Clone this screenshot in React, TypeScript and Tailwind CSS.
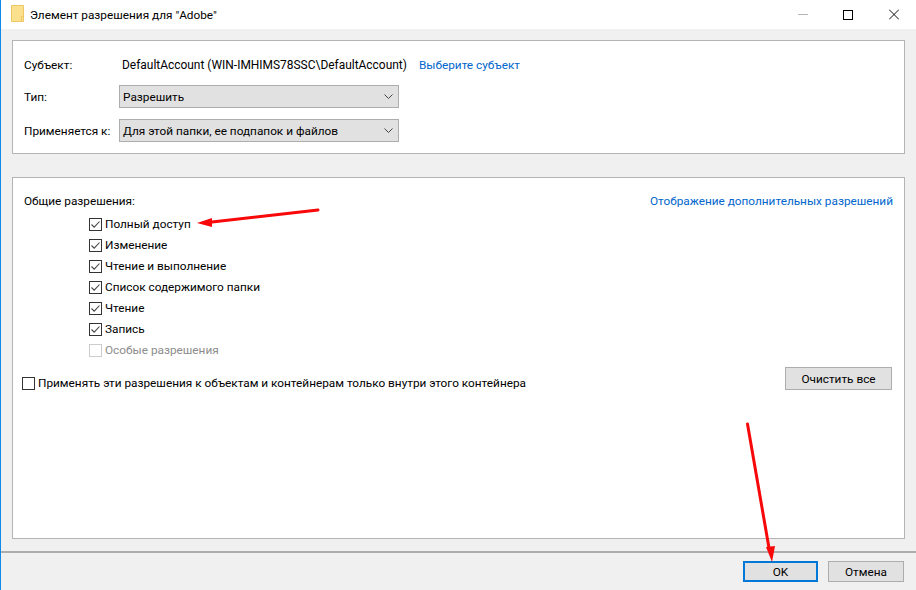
const font = { fontFamily: 'Roboto, "Noto Sans", sans-serif' };

const permissions = [
  'Полный доступ',
  'Изменение',
  'Чтение и выполнение',
  'Список содержимого папки',
  'Чтение',
  'Запись',
];

const Check = ({ checked = true, disabled = false }: { checked?: boolean; disabled?: boolean }) => (
  <span
    className={`flex h-[13px] w-[13px] shrink-0 items-center justify-center border bg-white ${
      disabled ? 'border-[#cccccc]' : 'border-[#333333]'
    }`}
  >
    {checked && (
      <svg width="11" height="11" viewBox="0 0 11 11" fill="none">
        <path d="M1.5 5.5 L4.2 8.2 L9.5 2.5" stroke="#444444" strokeWidth="1.1" />
      </svg>
    )}
  </span>
);

const Select = ({ value }: { value: string }) => (
  <div className="flex h-[23px] w-[280px] items-center justify-between border border-[#adadad] bg-[#e1e1e1] pl-[3px] pr-[5px]">
    <span>{value}</span>
    <svg width="9" height="6" viewBox="0 0 9 6" fill="none">
      <path d="M0.5 0.5 L4.5 4.5 L8.5 0.5" stroke="#444444" strokeWidth="1" />
    </svg>
  </div>
);

const Button = ({ label, className }: { label: string; className: string }) => (
  <div className={`flex items-center justify-center bg-[#e1e1e1] ${className}`}>{label}</div>
);

const App = () => (
  <div
    className="relative flex h-[590px] w-[916px] flex-col overflow-hidden border-l border-[#0f8ae6] bg-[#f0f0f0] text-[11.8px] leading-[16px] text-black"
    style={font}
  >
    <div className="flex h-[29px] shrink-0 items-center bg-white">
      <svg className="ml-[10px] -mt-[3px]" width="14" height="17" viewBox="0 0 14 17">
        <path d="M0.5 0.5 H12.5 V16.5 H0.5 Z" fill="#fbe08d" stroke="#eec864" />
        <path d="M10.5 16 V11.5 H13" fill="none" stroke="#eec864" />
      </svg>
      <span className="ml-[5px]">Элемент разрешения для "Adobe"</span>
      <div className="ml-auto flex items-center gap-[35px] pr-[17px]">
        <span className="h-px w-[10px] bg-[#b5b5b5]" />
        <span className="h-[10px] w-[10px] border border-black" />
        <svg className="ml-px" width="10" height="11" viewBox="0 0 10 11" fill="none">
          <path d="M0 0.5 L10 10.5 M10 0.5 L0 10.5" stroke="#111111" strokeWidth="1" />
        </svg>
      </div>
    </div>

    <div className="flex min-h-0 flex-1 flex-col px-[11px] pt-[11px]">
      <section className="flex h-[114px] w-[893px] shrink-0 flex-col border border-[#b4b4b4] bg-white pl-[11px] pt-[15px]">
        <div className="flex h-[18px] items-center">
          <span className="w-[98px]">Субъект:</span>
          <span className="text-[11.95px]">DefaultAccount (WIN-IMHIMS78SSC\DefaultAccount)</span>
          <span className="ml-[12px] text-[#0066cc]">Выберите субъект</span>
        </div>
        <div className="mt-[11px] flex items-center">
          <span className="w-[95px]">Тип:</span>
          <Select value="Разрешить" />
        </div>
        <div className="mt-[11px] flex items-center">
          <span className="w-[95px]">Применяется к:</span>
          <Select value="Для этой папки, ее подпапок и файлов" />
        </div>
      </section>

      <section className="mt-[23px] flex h-[362px] w-[893px] shrink-0 flex-col border border-[#b4b4b4] bg-white pt-[15px]">
        <div className="flex h-[16px] items-center justify-between pl-[11px] pr-[11px]">
          <span>Общие разрешения:</span>
          <span className="text-[#0066cc]">Отображение дополнительных разрешений</span>
        </div>
        <div className="mt-[7px] flex flex-col gap-[5px] pl-[76px]">
          {permissions.map((item) => (
            <label key={item} className="flex h-[16px] items-center gap-[3px]">
              <Check />
              <span>{item}</span>
            </label>
          ))}
          <label className="flex h-[16px] items-center gap-[3px] text-[#8c8c8c]">
            <Check checked={false} disabled />
            <span>Особые разрешения</span>
          </label>
        </div>
        <div className="mt-[9px] flex items-start justify-between pl-[9px] pr-[12px]">
          <label className="mt-[8px] flex h-[16px] items-center gap-[3px]">
            <Check checked={false} />
            <span>Применять эти разрешения к объектам и контейнерам только внутри этого контейнера</span>
          </label>
          <Button label="Очистить все" className="h-[23px] w-[107px] border border-[#adadad]" />
        </div>
      </section>
    </div>

    <div className="flex h-[39px] shrink-0 items-start justify-end gap-[10px] border-t-2 border-[#adadad] pr-[12px] pt-[8px]">
      <Button label="OK" className="h-[21px] w-[75px] border-2 border-[#0078d7]" />
      <Button label="Отмена" className="h-[21px] w-[76px] border border-[#adadad]" />
    </div>

    {/* red annotation arrows drawn on top of the screenshot */}
    <svg className="absolute left-[-1px] top-0" width="916" height="590" viewBox="0 0 916 590" fill="none">
      <path d="M318 210 L212 222" stroke="#f80808" strokeWidth="3" strokeLinecap="round" />
      <path d="M197 223 L212 218 L212 227 Z" fill="#f80808" />
      <path d="M747.5 424 L769 548" stroke="#f80808" strokeWidth="3" strokeLinecap="round" />
      <path d="M772 562 L766 547 L775 546 Z" fill="#f80808" />
    </svg>
  </div>
);

export default App;
